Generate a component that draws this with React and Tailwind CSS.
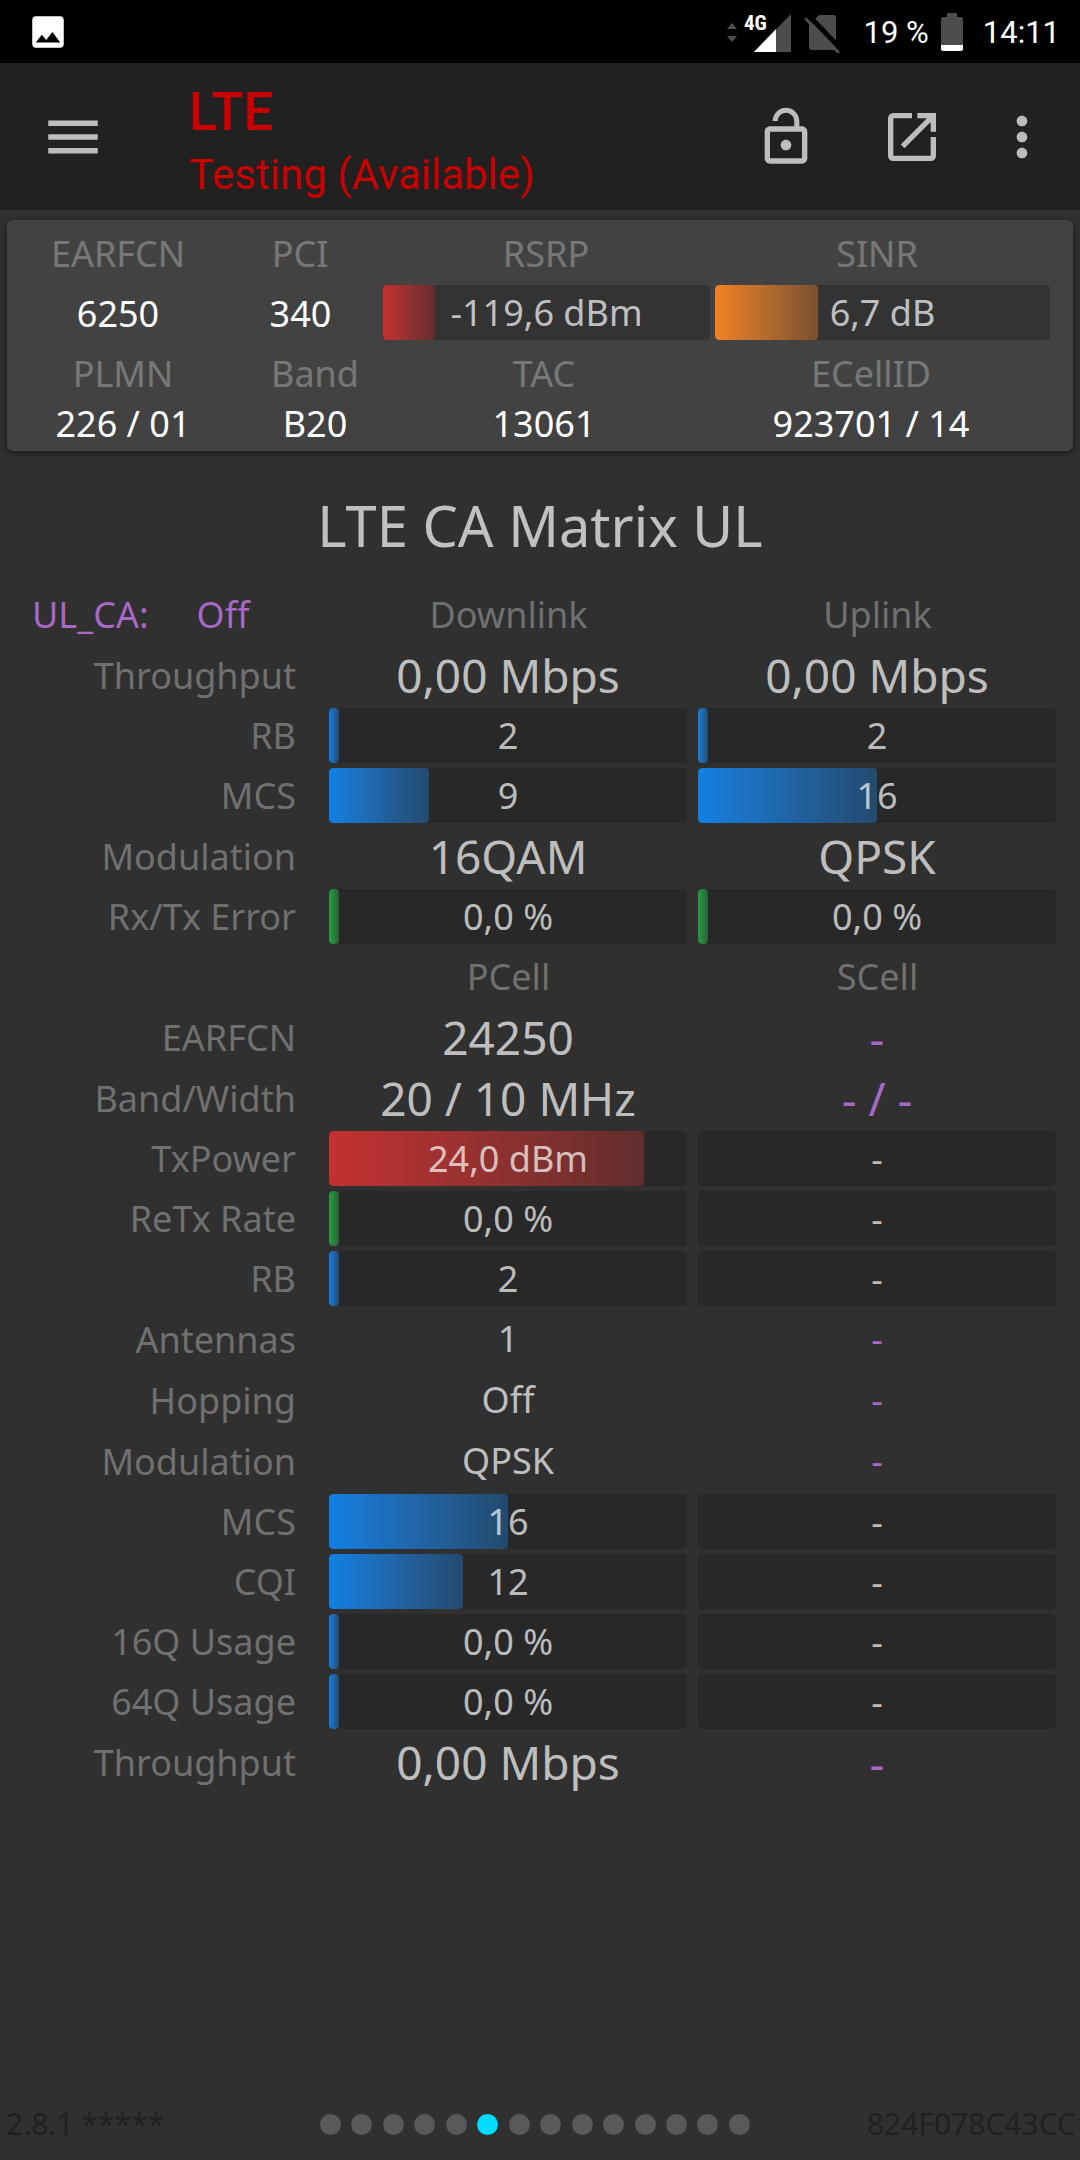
import { useState } from 'react'
import { MdImage, MdLockOpen, MdMenu, MdMoreVert, MdOpenInNew } from 'react-icons/md'

const tones = {
  blue: 'from-[#1180e3] to-[#234a6e]',
  green: 'from-[#22a040] to-[#2a5f38]',
  red: 'from-[#c43030] to-[#622d2d]',
  orange: 'from-[#f28220] to-[#7a512f]',
}

const linkRows = [
  { label: 'Throughput', values: ['0,00 Mbps', '0,00 Mbps'], large: true },
  { label: 'RB', values: ['2', '2'], bars: [2.8, 2.8], tone: 'blue' },
  { label: 'MCS', values: ['9', '16'], bars: [28, 50], tone: 'blue' },
  { label: 'Modulation', values: ['16QAM', 'QPSK'], large: true },
  { label: 'Rx/Tx Error', values: ['0,0 %', '0,0 %'], bars: [2.8, 2.8], tone: 'green' },
]

const cellRows = [
  { label: 'EARFCN', values: ['24250', '-'], large: true },
  { label: 'Band/Width', values: ['20 / 10 MHz', '- / -'], large: true },
  { label: 'TxPower', values: ['24,0 dBm', '-'], bars: [88, 0], tone: 'red' },
  { label: 'ReTx Rate', values: ['0,0 %', '-'], bars: [2.8, 0], tone: 'green' },
  { label: 'RB', values: ['2', '-'], bars: [2.8, 0], tone: 'blue' },
  { label: 'Antennas', values: ['1', '-'] },
  { label: 'Hopping', values: ['Off', '-'] },
  { label: 'Modulation', values: ['QPSK', '-'] },
  { label: 'MCS', values: ['16', '-'], bars: [50, 0], tone: 'blue' },
  { label: 'CQI', values: ['12', '-'], bars: [37.5, 0], tone: 'blue' },
  { label: '16Q Usage', values: ['0,0 %', '-'], bars: [2.8, 0], tone: 'blue' },
  { label: '64Q Usage', values: ['0,0 %', '-'], bars: [2.8, 0], tone: 'blue' },
  { label: 'Throughput', values: ['0,00 Mbps', '-'], large: true },
]

function Bar({ value, percent, tone, className = 'bg-[#282828]' }) {
  return (
    <div className={`relative h-[55px] overflow-hidden rounded text-center leading-[55px] text-white/70 ${className}`}>
      {percent > 0 && (
        <div
          className={`absolute inset-y-0 left-0 rounded bg-gradient-to-r ${tones[tone]}`}
          style={{ width: `${percent}%` }}
        />
      )}
      <span className="relative">{value}</span>
    </div>
  )
}

function Row({ row }) {
  return (
    <tr className={row.bars ? 'h-[60px]' : 'h-[61px]'}>
      <th scope="row" className="p-0 pt-0.5 pr-7 text-right font-normal text-white/33">
        {row.label}
      </th>
      {row.values.map((value, i) => (
        <td key={i} className="p-0 pr-1.5 pl-[5px] text-center">
          {row.bars ? (
            <Bar value={value} percent={row.bars[i]} tone={row.tone} />
          ) : (
            <span
              className={`${row.large ? 'text-[46px]' : ''} ${value.startsWith('-') ? 'text-[#a868c6]' : 'text-white/70'} block leading-[56px]`}
            >
              {value}
            </span>
          )}
        </td>
      ))}
    </tr>
  )
}

function StatusBar() {
  return (
    <div className="flex h-[63px] items-center bg-black pr-5 pl-[27px] font-[Roboto,sans-serif] text-[31px] text-white">
      <MdImage className="h-[42px] w-[42px]" />
      <div className="ml-auto flex items-center">
        <svg className="h-[42px] w-[66px]" viewBox="0 0 66 42" aria-hidden="true">
          <path d="M2 18l5-6 5 6zM2 25h10l-5 6z" fill="#4d4d4d" />
          <path d="M66 3v38H29z" fill="#4d4d4d" />
          <path d="M51 18v23H29z" fill="#fff" />
          <text x="19" y="19" fill="#fff" fontSize="21" fontWeight="700" fontFamily="'Roboto Condensed', Roboto, sans-serif">4G</text>
        </svg>
        <svg className="ml-[13px] h-[42px] w-9" viewBox="0 0 36 42" aria-hidden="true">
          <path d="M15 4h14q3 0 3 3v32H8q-3 0-3-3V12l6-4z" fill="#4d4d4d" />
          <path d="M5 5l32 33" stroke="#000" strokeWidth="5" />
          <path d="M2 8l32 33" stroke="#4d4d4d" strokeWidth="3" strokeLinecap="round" />
        </svg>
        <span className="mt-1 ml-6">19 %</span>
        <svg className="ml-3 h-[42px] w-[22px]" viewBox="0 0 22 42" aria-hidden="true">
          <path d="M6 2h10v4h4q2 0 2 2v26H0V8q0-2 2-2h4z" fill="#4d4d4d" />
          <path d="M0 34h22v4q0 2-2 2H2q-2 0-2-2z" fill="#fff" />
        </svg>
        <span className="mt-1 ml-5">14:11</span>
      </div>
    </div>
  )
}

function AppBar() {
  return (
    <header className="flex h-[147px] items-center bg-[#212121] pr-[26px] pl-10 font-[Roboto,sans-serif] text-[#bdbdbd]">
      <button type="button" aria-label="Menu">
        <MdMenu className="h-[66px] w-[66px]" />
      </button>
      <div className="ml-[83px] pt-2.5 text-[#c80000]">
        <h1 className="text-[53px] leading-[66px] font-medium">LTE</h1>
        <p className="text-[42px] leading-[60px]">Testing (Available)</p>
      </div>
      <div className="ml-auto flex gap-[46px]">
        <button type="button" aria-label="Lock" className="mr-4">
          <MdLockOpen className="h-16 w-16" />
        </button>
        <button type="button" aria-label="Open">
          <MdOpenInNew className="h-16 w-16" />
        </button>
        <button type="button" aria-label="More">
          <MdMoreVert className="h-16 w-16" />
        </button>
      </div>
    </header>
  )
}

function ServingCell() {
  return (
    <section className="mx-[7px] mt-2.5 rounded-md bg-[#424242] pt-[9px] pr-[9px] pb-0.5 pl-[11px] text-center leading-[50px] text-white shadow-[0_2px_6px_rgba(0,0,0,0.5)]">
      <div className="mr-5 grid grid-cols-[200fr_164fr_328fr_334fr] text-white/28">
        <span>EARFCN</span>
        <span>PCI</span>
        <span>RSRP</span>
        <span>SINR</span>
      </div>
      <div className="mt-1.5 mr-3.5 grid grid-cols-[200fr_165fr_332fr_335fr] leading-[57px]">
        <span>6250</span>
        <span>340</span>
        <Bar value="-119,6 dBm" percent={16} tone="red" className="mr-[5px] bg-[#333333]" />
        <Bar value="6,7 dB" percent={30.6} tone="orange" className="bg-[#333333]" />
      </div>
      <div className="mt-[7px] mr-2 grid grid-cols-[210fr_174fr_284fr_370fr] text-white/28">
        <span>PLMN</span>
        <span>Band</span>
        <span>TAC</span>
        <span>ECellID</span>
      </div>
      <div className="mr-2 grid grid-cols-[210fr_174fr_284fr_370fr]">
        <span>226 / 01</span>
        <span>B20</span>
        <span>13061</span>
        <span>923701 / 14</span>
      </div>
    </section>
  )
}

function Footer() {
  const [page, setPage] = useState(5)

  return (
    <footer className="mt-auto grid grid-cols-[320fr_430fr_330fr] items-center pb-[15px] text-[30px] leading-[42px] text-[#202020]">
      <span className="pl-1.5">2.8.1 *****</span>
      <nav className="flex justify-between">
        {Array.from({ length: 14 }, (_, i) => (
          <button
            key={i}
            type="button"
            aria-label={`Page ${i + 1}`}
            onClick={() => setPage(i)}
            className={`h-[21px] w-[21px] rounded-full ${page === i ? 'bg-[#00dcff]' : 'bg-[#595959]'}`}
          />
        ))}
      </nav>
      <span className="pr-1 text-right">824F078C43CC</span>
    </footer>
  )
}

function App() {
  return (
    <div className="flex min-h-screen flex-col bg-[#303030] font-['Noto_Sans',sans-serif] text-[36px]">
      <StatusBar />
      <AppBar />
      <ServingCell />
      <main className="pr-[18px]">
        <h2 className="mt-8 mb-4 pl-[18px] text-center text-[56px] leading-[84px] text-white/70">LTE CA Matrix UL</h2>
        <table className="w-full table-fixed border-collapse">
          <thead>
            <tr className="h-[61px] text-white/33">
              <th className="w-[324px] p-0 pt-0.5 pl-8 text-left font-normal text-[#a868c6]">
                UL_CA:<span className="ml-12">Off</span>
              </th>
              <th scope="col" className="p-0 pt-0.5 font-normal">Downlink</th>
              <th scope="col" className="p-0 pt-0.5 font-normal">Uplink</th>
            </tr>
          </thead>
          <tbody>
            {linkRows.map((row) => (
              <Row key={row.label} row={row} />
            ))}
          </tbody>
          <tbody>
            <tr className="h-[60px] text-white/33">
              <td />
              <th scope="col" className="p-0 pt-0.5 font-normal">PCell</th>
              <th scope="col" className="p-0 pt-0.5 font-normal">SCell</th>
            </tr>
            {cellRows.map((row) => (
              <Row key={row.label} row={row} />
            ))}
          </tbody>
        </table>
      </main>
      <Footer />
    </div>
  )
}

export default App
